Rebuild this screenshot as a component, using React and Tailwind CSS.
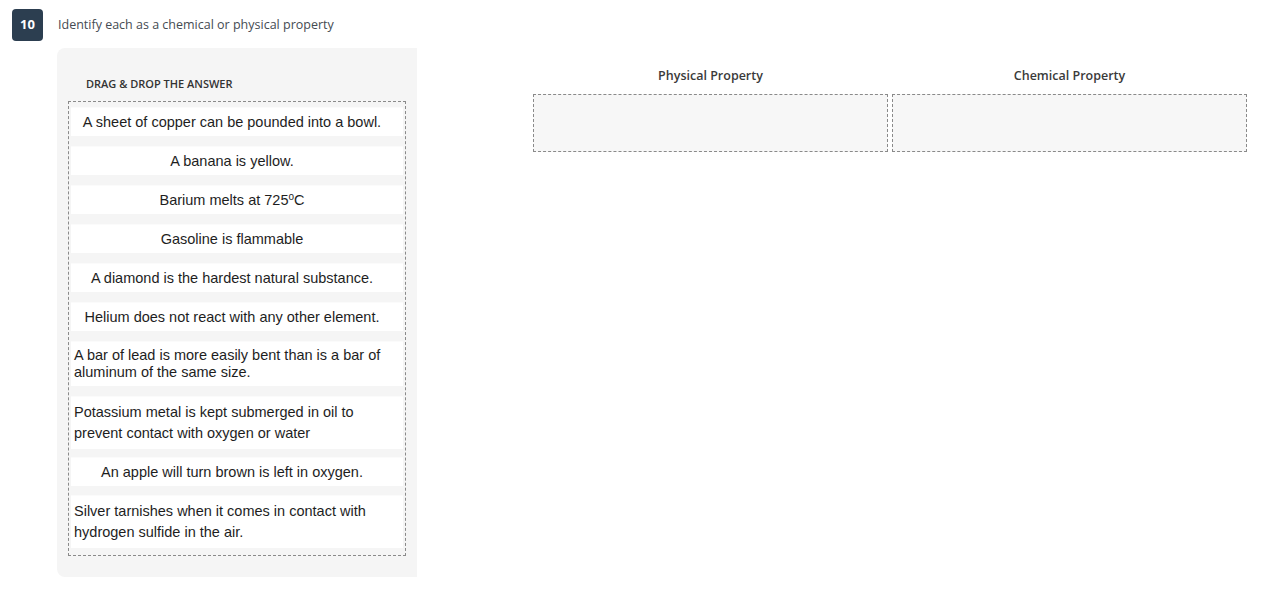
import React from 'react';

const answers = [
  { text: 'A sheet of copper can be pounded into a bowl.' },
  { text: 'A banana is yellow.' },
  { text: 'Barium melts at 725', sup: 'o', after: 'C' },
  { text: 'Gasoline is flammable' },
  { text: 'A diamond is the hardest natural substance.' },
  { text: 'Helium does not react with any other element.' },
  { text: 'A bar of lead is more easily bent than is a bar of aluminum of the same size.', left: true, leading: 'leading-[17px]' },
  { text: 'Potassium metal is kept submerged in oil to prevent contact with oxygen or water', left: true, leading: 'leading-[21px]' },
  { text: 'An apple will turn brown is left in oxygen.', shift: '-mt-[2px]' },
  { text: 'Silver tarnishes when it comes in contact with hydrogen sulfide in the air.', left: true, leading: 'leading-[21px]', shift: '-mt-[1px]' },
];

function AnswerItem({ item }) {
  return (
    <div className={`border-t border-[#fbfbfb] ${item.shift || ''}`}>
      <div
        className={`bg-white pl-[3px] pr-[13px] py-[5px] text-[14.5px] text-[#1e1e1e] ${item.leading || 'leading-[18px]'} ${item.left ? 'text-left' : 'text-center'}`}
        style={{ fontFamily: '"Liberation Sans", Arial, sans-serif' }}
      >
        {item.text}
        {item.sup && <sup className="text-[10px]">{item.sup}</sup>}
        {item.after}
      </div>
    </div>
  );
}

function DropZone({ title }) {
  return (
    <div className="flex-1 flex flex-col">
      <div className="text-center text-[12.5px] leading-[18px] font-semibold text-[#3a3a3a] mb-[9px]">
        {title}
      </div>
      <div className="h-[58px] bg-[#f7f7f7] border border-dashed border-[#8a8a8a]" />
    </div>
  );
}

export default function App() {
  return (
    <div
      className="min-h-screen bg-white pt-[9px] pl-[12px]"
      style={{ fontFamily: '"Open Sans", "Noto Sans", sans-serif' }}
    >
      {/* Question header */}
      <div className="flex items-center gap-[15px]">
        <div className="w-[31px] h-[32px] rounded-[4px] bg-[#2c3e50] text-white text-[13px] font-bold flex items-center justify-center">
          10
        </div>
        <div className="text-[12.5px] text-[#454b52]">Identify each as a chemical or physical property</div>
      </div>

      <div className="flex mt-[7px] pl-[45px]">
        {/* Answer bank */}
        <div className="w-[360px] shrink-0 bg-[#f5f5f5] rounded-l-lg px-[11px] pt-[28px] pb-[21px]">
          <div className="ml-[18px] mb-[9px] text-[11px] leading-[16px] font-semibold uppercase text-[#333]">
            Drag &amp; Drop the answer
          </div>
          <div className="border border-dashed border-[#8a8a8a] px-[2px] pt-[5px] pb-[7px] flex flex-col gap-[10px]">
            {answers.map((a, i) => (
              <AnswerItem key={i} item={a} />
            ))}
          </div>
        </div>

        {/* Drop targets */}
        <div className="flex-1 pl-[116px] pr-[35px] pt-[19px] flex gap-[4px]">
          <DropZone title="Physical Property" />
          <DropZone title="Chemical Property" />
        </div>
      </div>
    </div>
  );
}
